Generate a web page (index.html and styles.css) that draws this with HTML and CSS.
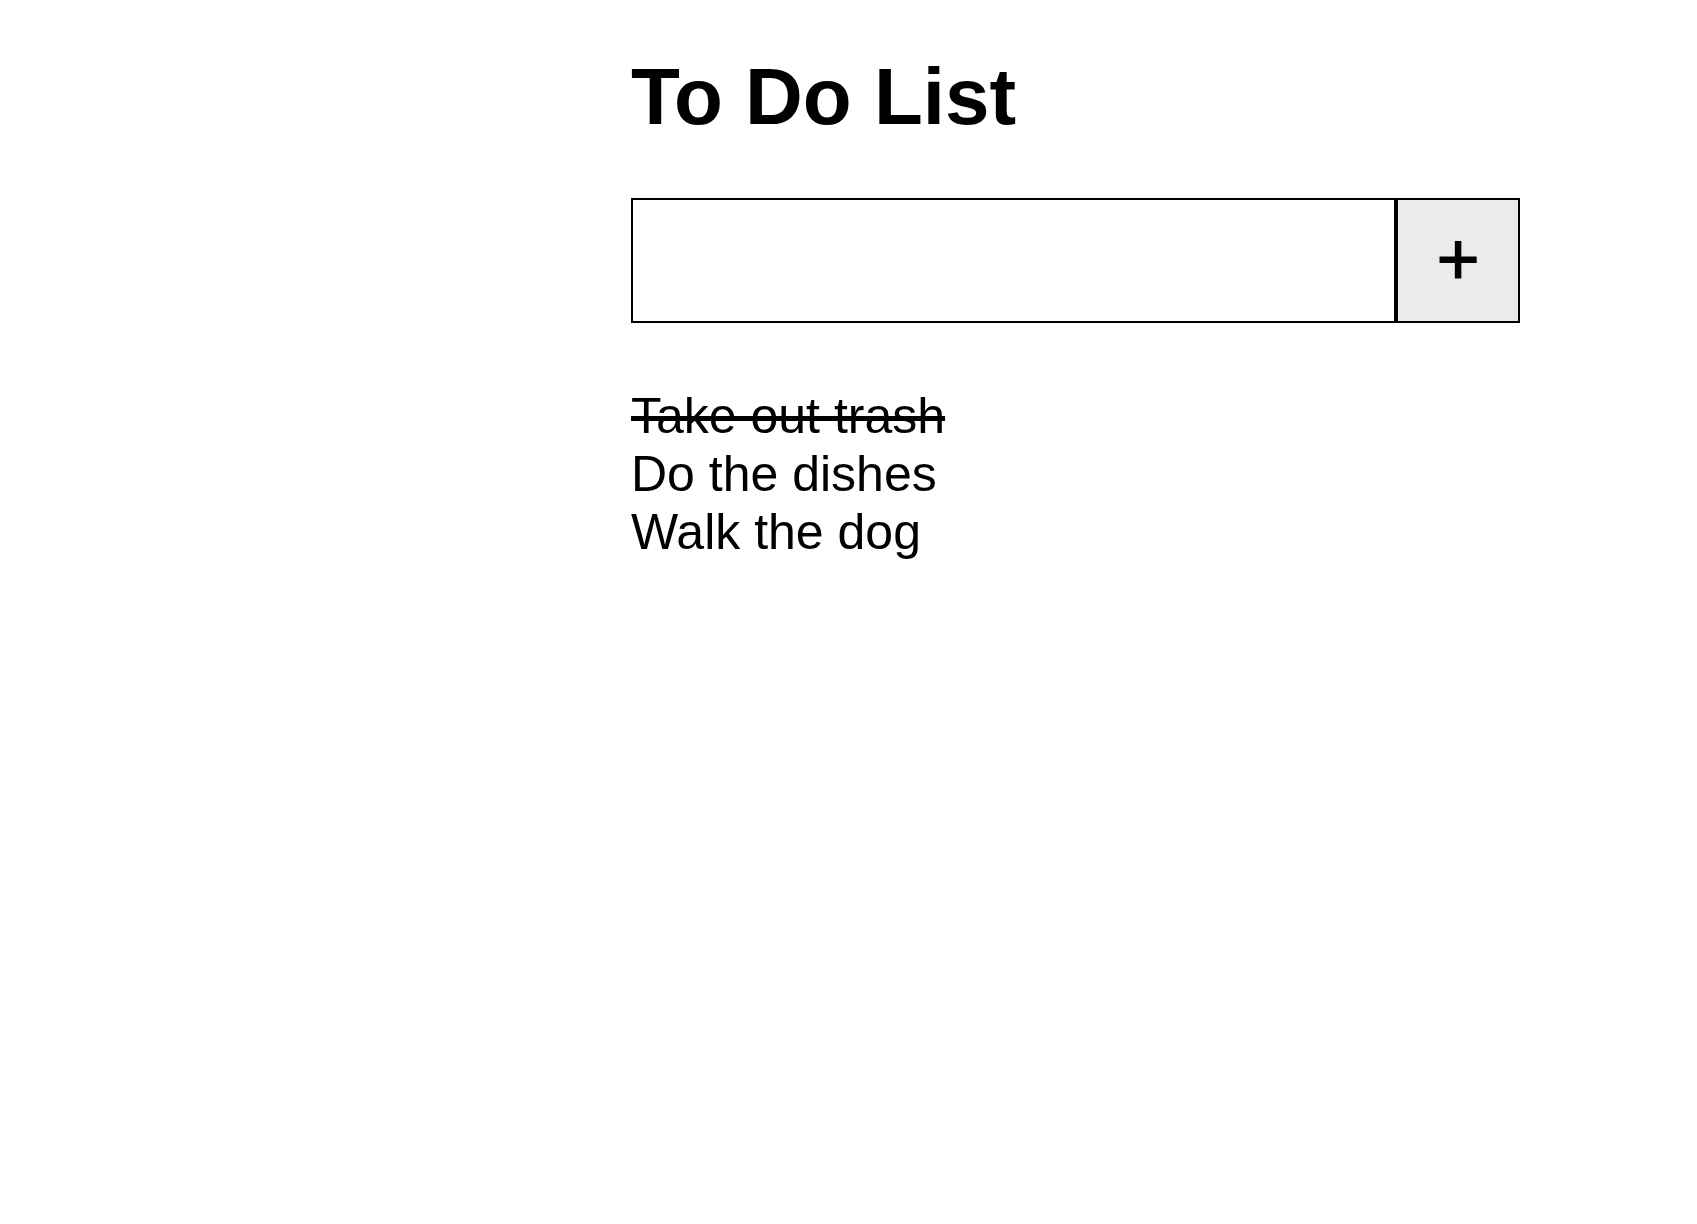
FILE: index.html
```html
<!DOCTYPE html>
<html lang="en">
<head>
<meta charset="utf-8">
<title>To Do List</title>
<link rel="stylesheet" href="styles.css">
</head>
<body>
<main class="app">
  <h1 class="title">To Do List</h1>
  <form class="add-form" onsubmit="return false">
    <input class="add-input" type="text" aria-label="New task">
    <button class="add-btn" type="submit">+</button>
  </form>
  <ul class="todo-list">
    <li class="todo-item done">Take out trash</li>
    <li class="todo-item">Do the dishes</li>
    <li class="todo-item">Walk the dog</li>
  </ul>
</main>
</body>
</html>
```
FILE: styles.css
```css
html, body {
  margin: 0;
  padding: 0;
  background: #ffffff;
}

body {
  font-family: "Liberation Sans", Arial, Helvetica, sans-serif;
  color: #000000;
}

.app {
  width: 889px;
  padding: 51px 0 0 631px;
}

.title {
  margin: 0;
  font-size: 80px;
  font-weight: bold;
  line-height: normal;
}

.add-form {
  display: flex;
  margin: 55px 0 0 0;
  height: 125px;
}

.add-input {
  flex: 1;
  box-sizing: border-box;
  height: 125px;
  margin: 0;
  border: 2px solid #000000;
  background: #ffffff;
  font-family: "Liberation Sans", Arial, sans-serif;
  font-size: 50px;
  padding: 0 12px;
  outline: none;
}

.add-btn {
  box-sizing: border-box;
  width: 124px;
  height: 125px;
  margin: 0;
  padding: 0 0 2px 0;
  border: 2px solid #000000;
  background: #ebebeb;
  color: #000000;
  font-family: "Liberation Sans", Arial, sans-serif;
  font-size: 74px;
  font-weight: normal;
  -webkit-text-stroke: 1.2px #000000;
  line-height: 1;
  display: flex;
  align-items: center;
  justify-content: center;
}

.todo-list {
  list-style: none;
  margin: 64px 0 0 0;
  padding: 0;
}

.todo-item {
  font-size: 50px;
  line-height: normal;
}

.todo-item.done {
  text-decoration: line-through;
}
```
